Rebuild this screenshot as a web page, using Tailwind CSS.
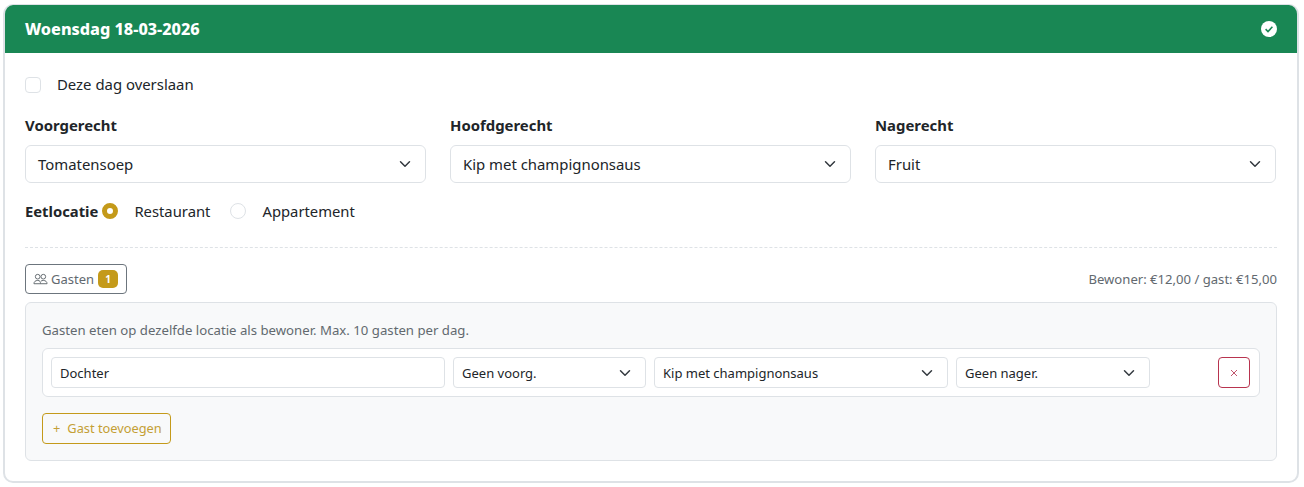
<!DOCTYPE html>
<html lang="nl">
<head>
  <meta charset="UTF-8">
  <title>Maaltijden</title>
  <script src="https://cdn.jsdelivr.net/npm/@tailwindcss/browser@4"></script>
</head>
<body class="bg-white font-['Noto_Sans',sans-serif] text-[#212529] overflow-hidden">
  <div class="ml-[3px] mr-[5px] mt-[4px] h-[479px] border-2 border-t border-[#dee2e6] rounded-[10px] overflow-hidden flex flex-col">
    <!-- header -->
    <div class="h-[48px] bg-[#198754] flex items-center justify-between pl-[20px] pr-[20px] text-white shrink-0">
      <span class="text-[16.2px] font-extrabold">Woensdag 18-03-2026</span>
      <svg class="w-[16px] h-[16px]" viewBox="0 0 16 16"><circle cx="8" cy="8" r="8" fill="#fff"/><path d="M4.600 8.200 7 10.500 11.400 5.800" fill="none" stroke="#198754" stroke-width="1.600"/></svg>
    </div>

    <div class="flex-1 px-[20px] pt-[22px]">
      <label class="flex items-center h-[20px] -mt-px">
        <span class="w-[16px] h-[16px] border border-[#dee2e6] rounded-[4px] bg-white mt-[2px]"></span>
        <span class="ml-[16px] text-[14.9px]">Deze dag overslaan</span>
      </label>

      <div class="grid grid-cols-3 gap-x-[24px] mt-[21px] mr-px">
        <div>
          <div class="text-[14.9px] font-bold h-[20px] leading-[20px]">Voorgerecht</div>
          <div class="mt-[10px] h-[38px] border border-[#dee2e6] rounded-[6px] flex items-center justify-between pl-[12px] pr-[14px] text-[14.9px]">
            <span>Tomatensoep</span>
            <svg class="w-[12px] h-[12px]" viewBox="0 0 16 16"><path d="m2 5 6 6 6-6" fill="none" stroke="#343a40" stroke-width="2" stroke-linecap="round" stroke-linejoin="round"/></svg>
          </div>
        </div>
        <div>
          <div class="text-[14.9px] font-bold h-[20px] leading-[20px]">Hoofdgerecht</div>
          <div class="mt-[10px] h-[38px] border border-[#dee2e6] rounded-[6px] flex items-center justify-between pl-[12px] pr-[14px] text-[14.9px]">
            <span>Kip met champignonsaus</span>
            <svg class="w-[12px] h-[12px]" viewBox="0 0 16 16"><path d="m2 5 6 6 6-6" fill="none" stroke="#343a40" stroke-width="2" stroke-linecap="round" stroke-linejoin="round"/></svg>
          </div>
        </div>
        <div>
          <div class="text-[14.9px] font-bold h-[20px] leading-[20px]">Nagerecht</div>
          <div class="mt-[10px] h-[38px] border border-[#dee2e6] rounded-[6px] flex items-center justify-between pl-[12px] pr-[14px] text-[14.9px]">
            <span>Fruit</span>
            <svg class="w-[12px] h-[12px]" viewBox="0 0 16 16"><path d="m2 5 6 6 6-6" fill="none" stroke="#343a40" stroke-width="2" stroke-linecap="round" stroke-linejoin="round"/></svg>
          </div>
        </div>
      </div>

      <div class="flex items-center h-[20px] mt-[18px] text-[14.8px]">
        <span class="font-bold">Eetlocatie</span>
        <span class="ml-[4px] w-[16px] h-[16px] rounded-full border-[5px] border-[#c49a1a] bg-white"></span>
        <span class="ml-[16px]">Restaurant</span>
        <span class="ml-[20px] w-[16px] h-[16px] rounded-full border border-[#dee2e6] bg-white"></span>
        <span class="ml-[16px]">Appartement</span>
      </div>

      <div class="mt-[26px] border-t border-dashed border-[#dee2e6]"></div>

      <div class="mt-[16px] flex items-center justify-between">
        <button class="h-[30px] w-[102px] border border-[#6c757d] rounded-[4px] flex items-center pl-[7px] text-[13px] text-[#62696f]">
          <svg class="w-[15px] h-[15px]" viewBox="0 0 16 16" fill="none" stroke="#5f666c" stroke-width="1"><circle cx="5" cy="5" r="2.500"/><circle cx="11" cy="5" r="2.500"/><path d="M1 12.500c0-2 1.500-3.500 4-3.500s3 1.500 3 3.500zM8 12.500h7c0-2-1.500-3.500-4-3.500-1 0-2 .3-2.600.8"/></svg>
          <span class="ml-[3px] pt-[2px]">Gasten</span>
          <span class="ml-[4px] w-[20px] h-[18px] rounded-[5px] bg-[#c49a1a] text-white text-[10px] font-bold flex items-center justify-center">1</span>
        </button>
        <span class="text-[13.1px] text-[#62696f] pt-[2px]">Bewoner: €12,00 / gast: €15,00</span>
      </div>

      <div class="mt-[8px] h-[159px] bg-[#f8f9fa] border border-[#dee2e6] rounded-[6px] px-[16px] pt-[17px]">
        <p class="text-[13.2px] text-[#62696f] leading-[20px] h-[20px]">Gasten eten op dezelfde locatie als bewoner. Max. 10 gasten per dag.</p>
        <div class="mt-[8px] h-[49px] bg-white border border-[#dee2e6] rounded-[6px] pl-[8px] pr-[9px] flex items-center text-[13px]">
          <div class="w-[394px] h-[31px] border border-[#dee2e6] rounded-[4px] flex items-center pl-[8px] pt-[2px]">Dochter</div>
          <div class="ml-[8px] w-[193px] h-[31px] border border-[#dee2e6] rounded-[4px] flex items-center justify-between pl-[8px] pr-[14px]">
            <span class="pt-[2px]">Geen voorg.</span>
            <svg class="w-[12px] h-[12px]" viewBox="0 0 16 16"><path d="m2 5 6 6 6-6" fill="none" stroke="#343a40" stroke-width="2" stroke-linecap="round" stroke-linejoin="round"/></svg>
          </div>
          <div class="ml-[8px] w-[294px] h-[31px] border border-[#dee2e6] rounded-[4px] flex items-center justify-between pl-[8px] pr-[14px]">
            <span class="pt-[2px]">Kip met champignonsaus</span>
            <svg class="w-[12px] h-[12px]" viewBox="0 0 16 16"><path d="m2 5 6 6 6-6" fill="none" stroke="#343a40" stroke-width="2" stroke-linecap="round" stroke-linejoin="round"/></svg>
          </div>
          <div class="ml-[8px] w-[194px] h-[31px] border border-[#dee2e6] rounded-[4px] flex items-center justify-between pl-[8px] pr-[14px]">
            <span class="pt-[2px]">Geen nager.</span>
            <svg class="w-[12px] h-[12px]" viewBox="0 0 16 16"><path d="m2 5 6 6 6-6" fill="none" stroke="#343a40" stroke-width="2" stroke-linecap="round" stroke-linejoin="round"/></svg>
          </div>
          <button class="ml-auto w-[32px] h-[31px] border border-[#b8344f] rounded-[4px] flex items-center justify-center">
            <svg class="w-[8px] h-[8px]" viewBox="0 0 8 8"><path d="M1 1l6 6M7 1l-6 6" stroke="#c0566d" stroke-width="1"/></svg>
          </button>
        </div>
        <button class="mt-[16px] h-[31px] w-[129px] border border-[#c49a1a] rounded-[4px] flex items-center pl-[10px] text-[12.8px] text-[#c49f35]">
          <span>+</span><span class="ml-[7px]">Gast toevoegen</span>
        </button>
      </div>
    </div>
  </div>
</body>
</html>
